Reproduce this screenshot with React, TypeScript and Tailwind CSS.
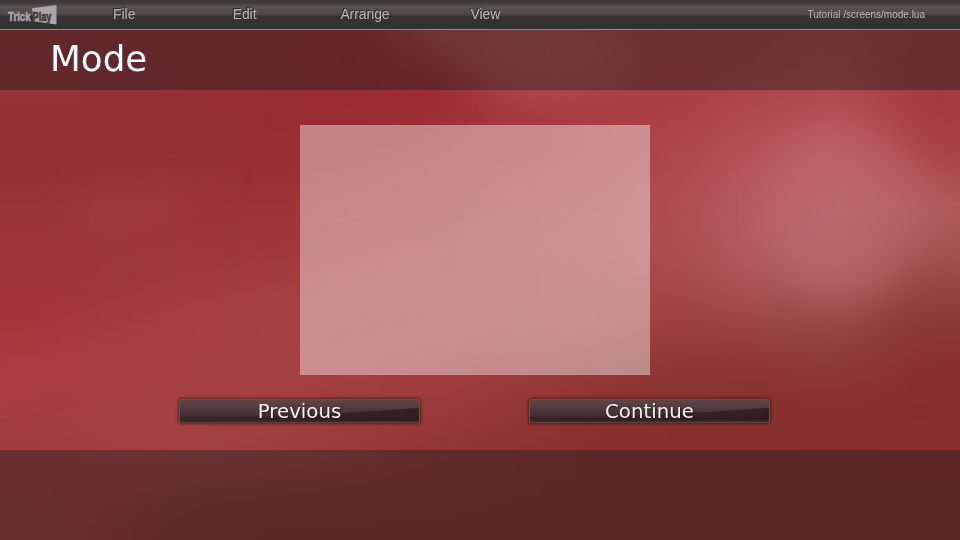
import React from "react";

// Coarse colour field, 80x60 px per cell, blended into a soft backdrop.
const FIELD = [
  "953034 963034 983034 983034 9c3235 a83f41 ac4b4c a84547 a54143 a64244 a64346 a34043",
  "98333a 97323a 962f36 962c32 982a30 9a2a2f a63c42 ab4046 a83c40 ac4349 b0484e a63b40",
  "902e34 922f32 952f33 982e34 9c3036 9f343a a4383e a83c41 ae464c b8545a bc5c63 ae474d",
  "9c3539 a0393b 9d3538 9c3438 a0373a a33c3d a84144 ac474b b05055 b65e64 ba686c b06060",
  "9f3639 9e373a a0383c a13a3d a43b3e a64044 a64446 a84647 aa4c4c b05d61 b06466 9e4c4a",
  "a43438 a33a3e a63f43 a74144 a54044 a44042 a34243 a24342 9b3d3c 954240 92463f 863530",
  "ab3e43 a93f43 a73e42 a43f42 a33e40 a03c3e 993939 8e3433 883130 87312f 88322f 882f2e",
  "a03c3e a24144 a34547 a04042 983a3b 903634 8a3230 87302f 87302e 88302e 882f2e 892f2e",
  "9c3e3e 963636 8a3230 88302e 88302e 88302e 88302e 88302e 88302e 88302e 882f2e 882f2e",
].map((r) => r.split(" "));

function Backdrop() {
  const last = FIELD.length - 1;
  return (
    <svg className="absolute inset-0 h-full w-full" viewBox="0 0 960 540" aria-hidden="true">
      <defs>
        <filter id="field" filterUnits="userSpaceOnUse" x="-160" y="-160" width="1280" height="860" colorInterpolationFilters="sRGB">
          <feGaussianBlur stdDeviation="30" />
        </filter>
        <filter id="soft" filterUnits="userSpaceOnUse" x="-100" y="-100" width="1200" height="800" colorInterpolationFilters="sRGB">
          <feGaussianBlur stdDeviation="15" />
        </filter>
      </defs>
      <g filter="url(#field)">
        {FIELD.map((row, y) =>
          row.map((c, x) => {
            const left = x === 0 ? -160 : x * 80;
            const right = x === 11 ? 1120 : x * 80 + 81;
            const top = y === 0 ? -160 : y * 60;
            const bottom = y === last ? 700 : y * 60 + 61;
            return <rect key={`${x}-${y}`} x={left} y={top} width={right - left} height={bottom - top} fill={`#${c}`} />;
          }),
        )}
      </g>
      <g filter="url(#soft)">
        <path d="M370 20 L460 75 Q520 112 590 90 L650 60 L560 20 Z" fill="#c8686c" opacity=".25" />
        <path d="M780 145 Q835 110 885 140 Q945 190 930 235 Q890 310 820 300 Q740 250 780 145 Z" fill="#c07479" opacity=".24" />
        <path d="M890 90 L980 90 L980 195 Q930 155 890 90 Z" fill="#a33439" opacity=".4" />
        <path d="M-20 345 L160 300 L420 235 L420 285 L180 350 L-20 400 Z" fill="#b4494d" opacity=".2" />
        <path d="M60 210 L240 180 L150 215 L110 225 Z" fill="#b4494d" opacity=".3" />
      </g>
    </svg>
  );
}

function Logo() {
  return (
    <svg className="h-[22px] w-[52px] shrink-0" viewBox="0 0 52 22" role="img">
      <path d="M25 4.2 L49.5 1 V20.5 L26.5 17.3 Z" fill="#a9a7a7" />
      <g fontFamily="'Liberation Sans Narrow','Liberation Sans',sans-serif" fontWeight="700" fontSize="12.5" strokeWidth=".6">
        <text x="1" y="17" fill="#a9a7a7" stroke="#a9a7a7" textLength="22.6" lengthAdjust="spacingAndGlyphs">Trick</text>
        <text x="25.6" y="17" fill="#3c3737" stroke="#3c3737" textLength="18.8" lengthAdjust="spacingAndGlyphs">Play</text>
      </g>
    </svg>
  );
}

const MENUS = ["File", "Edit", "Arrange", "View"];

function MenuBar() {
  return (
    <header className="flex h-[30px] shrink-0 items-start border-b border-[#918b8b] bg-[linear-gradient(to_bottom,#3d3737_0px,#413b3b_3px,#575151_7px,#524c4c_12px,#4a4444_15px,#383232_16px,#353030_29px)] pl-[7px] font-['Liberation_Sans',Arial,sans-serif] text-[#bcb9b9]">
      <div className="w-[57px] pt-[4px]">
        <Logo />
      </div>
      <nav className="flex text-[13.8px] leading-[16px] [text-shadow:-1px_-1px_0_#2c2727]">
        {MENUS.map((m) => (
          <span key={m} className="w-[120.4px] pt-[7px] text-center">
            {m}
          </span>
        ))}
      </nav>
      <span className="ml-auto pr-[35px] pt-[9px] text-[10px] leading-[12px]">Tutorial /screens/mode.lua</span>
    </header>
  );
}

function GlossButton({ label }: { label: string }) {
  return (
    <button className="relative h-[24px] w-[241px] overflow-hidden rounded-[3px] border border-[#6d4c4c] border-b-[#5c4040] bg-[linear-gradient(to_bottom,#5f4546,#533b3c_35%,#452f30_68%,#352324_85%,#3c292a)] shadow-[0_0_3px_1px_rgba(50,15,15,0.65)]">
      <svg className="absolute inset-0 h-full w-full" viewBox="0 0 239 23" preserveAspectRatio="none" aria-hidden="true">
        <defs>
          <linearGradient id={`shade-${label}`}>
            <stop offset="0.1" stopColor="#2c1b1c" stopOpacity="0" />
            <stop offset="0.65" stopColor="#2c1b1c" stopOpacity=".6" />
            <stop offset="1" stopColor="#2c1b1c" stopOpacity=".8" />
          </linearGradient>
        </defs>
        <path d="M0 18 Q140 17 239 8 V21 H0 Z" fill={`url(#shade-${label})`} />
      </svg>
      <span className="relative block text-[19.8px] leading-[23px] text-[#f5f2f2] [text-shadow:1px_1px_1px_#2b1a1a]">{label}</span>
    </button>
  );
}

export default function App() {
  return (
    <div className="relative h-[540px] w-[960px] overflow-hidden bg-[#a03a3e] font-['DejaVu_Sans',Verdana,sans-serif]">
      <Backdrop />
      <div className="relative flex h-full flex-col">
        <MenuBar />
        <div className="flex h-[60px] shrink-0 items-center bg-[rgba(20,26,28,0.4)] pl-[50px]">
          <h1 className="pb-[2px] text-[35.7px] leading-[42px] text-white">Mode</h1>
        </div>
        <main className="flex h-[360px] shrink-0 flex-col pt-[35px]">
          <div className="ml-[300px] h-[250px] w-[350px] bg-white/41" />
          <div className="mt-[24px] flex gap-[109px] pl-[179px]">
            <GlossButton label="Previous" />
            <GlossButton label="Continue" />
          </div>
        </main>
        <footer className="flex-1 bg-[rgba(20,26,28,0.38)]" />
      </div>
    </div>
  );
}
